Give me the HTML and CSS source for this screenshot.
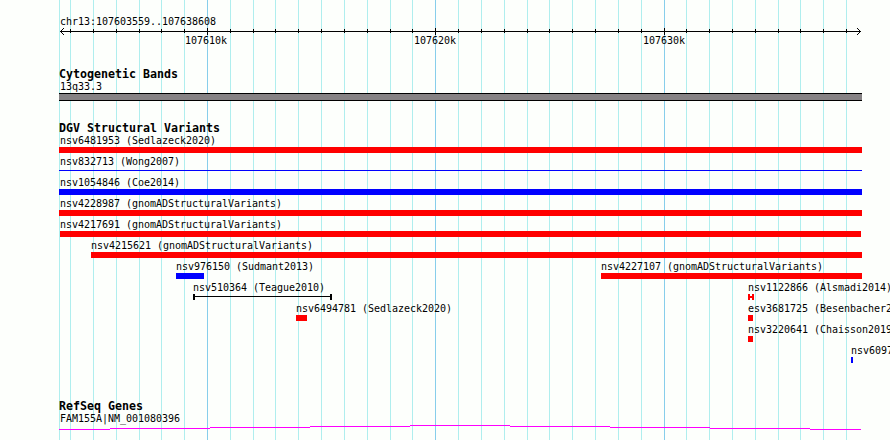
FILE: index.html
```html
<!DOCTYPE html>
<html lang="en">
<head>
    <meta charset="UTF-8">
    <title>chr13:107603559..107638608</title>
    <link rel="stylesheet" href="styles.css">
</head>
<body>

    <div class="browser">
        <svg class="grid" width="890" height="440">
            <path class="minor" d="M59.5 0v440M70.5 0v440M93.5 0v440M116.5 0v440M139.5 0v440M161.5 0v440M184.5 0v440M230.5 0v440M253.5 0v440M275.5 0v440M298.5 0v440M321.5 0v440M344.5 0v440M367.5 0v440M390.5 0v440M412.5 0v440M458.5 0v440M481.5 0v440M504.5 0v440M527.5 0v440M549.5 0v440M572.5 0v440M595.5 0v440M618.5 0v440M641.5 0v440M686.5 0v440M709.5 0v440M732.5 0v440M755.5 0v440M778.5 0v440M800.5 0v440M823.5 0v440M846.5 0v440"/>
            <path class="major" d="M207.5 0v440M435.5 0v440M664.5 0v440"/>
        </svg>

        <div class="ruler">
            <div class="label">chr13:107603559..107638608</div>
            <svg class="axis" width="803" height="7">
                <path d="M1 3.5h801M4.5 0v1M3.5 1v1M2.5 2v1M2.5 4v1M3.5 5v1M4.5 6v1M798.5 0v1M799.5 1v1M800.5 2v1M800.5 4v1M799.5 5v1M798.5 6v1"/>
                <path d="M11.5 1v4M34.5 1v4M57.5 1v4M80.5 1v4M102.5 1v4M125.5 1v4M171.5 1v4M194.5 1v4M216.5 1v4M239.5 1v4M262.5 1v4M285.5 1v4M308.5 1v4M331.5 1v4M353.5 1v4M399.5 1v4M422.5 1v4M445.5 1v4M468.5 1v4M490.5 1v4M513.5 1v4M536.5 1v4M559.5 1v4M582.5 1v4M627.5 1v4M650.5 1v4M673.5 1v4M696.5 1v4M719.5 1v4M741.5 1v4M764.5 1v4M787.5 1v4"/>
                <path d="M148.5 0v7M376.5 0v7M605.5 0v7"/>
            </svg>
            <div class="ticks">
                <span>107610k</span>
                <span>107620k</span>
                <span>107630k</span>
            </div>
        </div>

        <div class="track cytoband">
            <h2>Cytogenetic Bands</h2>
            <div class="label">13q33.3</div>
            <div class="band"></div>
        </div>

        <div class="track variants">
            <h2>DGV Structural Variants</h2>
            <div class="row">
                <div class="feature edge" style="--x: 0px; --w: 803px"><span>nsv6481953 (Sedlazeck2020)</span><i class="bar loss"></i></div>
            </div>
            <div class="row">
                <div class="feature edge" style="--x: 0px; --w: 803px"><span>nsv832713 (Wong2007)</span><i class="bar gain thin"></i></div>
            </div>
            <div class="row">
                <div class="feature edge" style="--x: 0px; --w: 803px"><span>nsv1054846 (Coe2014)</span><i class="bar gain"></i></div>
            </div>
            <div class="row">
                <div class="feature edge" style="--x: 0px; --w: 803px"><span>nsv4228987 (gnomADStructuralVariants)</span><i class="bar loss"></i></div>
            </div>
            <div class="row">
                <div class="feature" style="--x: 1px; --w: 801px"><span>nsv4217691 (gnomADStructuralVariants)</span><i class="bar loss"></i></div>
            </div>
            <div class="row">
                <div class="feature" style="--x: 32px; --w: 771px"><span>nsv4215621 (gnomADStructuralVariants)</span><i class="bar loss"></i></div>
            </div>
            <div class="row">
                <div class="feature" style="--x: 117px; --w: 28px"><span>nsv976150 (Sudmant2013)</span><i class="bar gain"></i></div>
                <div class="feature" style="--x: 542px; --w: 261px"><span>nsv4227107 (gnomADStructuralVariants)</span><i class="bar loss"></i></div>
            </div>
            <div class="row">
                <div class="feature" style="--x: 134px; --w: 139px"><span>nsv510364 (Teague2010)</span><i class="bar range"></i></div>
                <div class="feature" style="--x: 689px; --w: 6px"><span>nsv1122866 (Alsmadi2014)</span><i class="bar range red"></i></div>
            </div>
            <div class="row">
                <div class="feature" style="--x: 237px; --w: 11px"><span>nsv6494781 (Sedlazeck2020)</span><i class="bar loss"></i></div>
                <div class="feature" style="--x: 689px; --w: 5px"><span>esv3681725 (Besenbacher2016)</span><i class="bar loss"></i></div>
            </div>
            <div class="row">
                <div class="feature" style="--x: 689px; --w: 5px"><span>nsv3220641 (Chaisson2019)</span><i class="bar loss"></i></div>
            </div>
            <div class="row">
                <div class="feature" style="--x: 792px; --w: 2px"><span>nsv6097</span><i class="bar gain"></i></div>
            </div>
        </div>

        <div class="track genes">
            <h2>RefSeq Genes</h2>
            <div class="label">FAM155A|NM_001080396</div>
            <svg class="intron" width="803" height="5">
                <path d="M0 4.5h51M51 3.5h100M151 2.5h100M251 1.5h100M351 .5h100M451 1.5h100M551 2.5h100M651 3.5h100M751 4.5h51"/>
            </svg>
        </div>
    </div>

</body>
</html>
```

FILE: styles.css
```css
body {
    margin: 0;
    background-color: #fdfffc;
    color: #000;
    font-family: "DejaVu Sans Mono", monospace;
    font-size: 10px;
    line-height: 14px;
    letter-spacing: -0.02px;
}
.browser {
    position: relative;
    box-sizing: border-box;
    height: 440px;
    padding: 15px 0 0 59px;
    overflow: hidden;
    white-space: nowrap;
}
.grid {
    position: absolute;
    top: 0;
    left: 0;
    z-index: -1;
}
svg {
    display: block;
    fill: none;
    shape-rendering: crispEdges;
}
.minor {
    stroke: #afeeee;
}
.major {
    stroke: #87ceeb;
}
.label {
    height: 12px;
    padding-left: 1px;
}
.axis {
    margin-top: 1px;
    stroke: #000;
}
.ticks {
    display: flex;
    gap: 187px;
    height: 12px;
    padding-left: 126px;
    line-height: 12px;
}
.ticks span {
    width: 42px;
}
h2 {
    margin: 0;
    height: 13px;
    font-size: 11.63px;
    line-height: 14px;
    font-weight: bold;
    letter-spacing: 0;
}
.cytoband {
    margin-top: 20px;
}
.band {
    box-sizing: border-box;
    width: 803px;
    height: 8px;
    margin-top: 1px;
    background-color: #868284;
    border-top: 1px solid #000;
    border-bottom: 1px solid #000;
}
.variants {
    margin-top: 20px;
}
.row {
    display: grid;
    height: 21px;
}
.feature {
    grid-area: 1 / 1;
    width: 0;
    margin-left: var(--x);
}
.feature span {
    display: block;
    height: 13px;
}
.edge span {
    padding-left: 1px;
}
.bar {
    display: block;
    box-sizing: border-box;
    width: var(--w);
    height: 6px;
}
.loss {
    background-color: #f00;
}
.gain {
    background-color: #00f;
}
.thin {
    height: 1px;
    margin-top: 2px;
}
/* bracketed span: end caps with a line through the middle */
.range {
    border: solid #000;
    border-width: 0 2px;
    background: linear-gradient(#000, #000) 0 2px / 100% 1px no-repeat;
}
.range.red {
    border-color: #f00;
    background: linear-gradient(#f00, #f00) 0 2px / 100% 2px no-repeat;
}
.genes {
    margin-top: 34px;
}
.intron {
    margin-top: 1px;
    stroke: #f0f;
}
```
